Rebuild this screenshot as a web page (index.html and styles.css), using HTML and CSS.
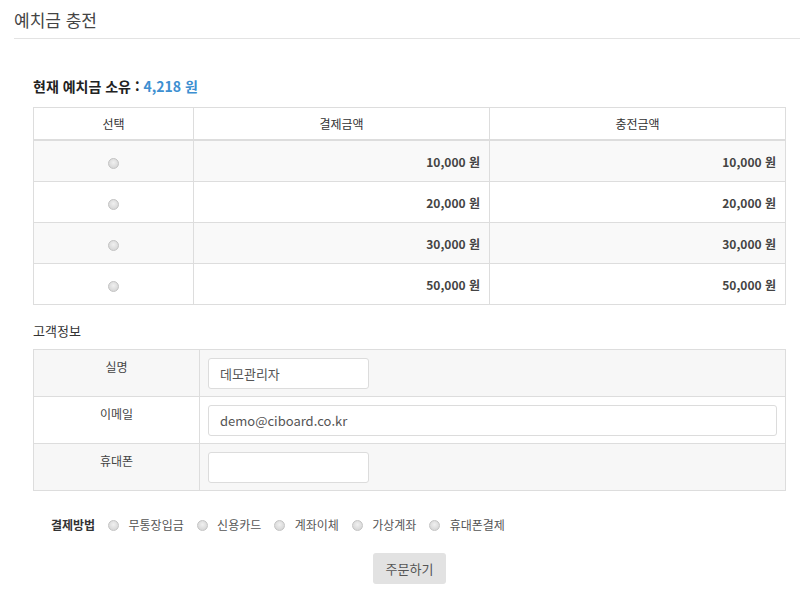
FILE: index.html
```html
<!DOCTYPE html>
<html lang="ko">
<head>
    <meta charset="UTF-8">
    <title>예치금 충전</title>
    <link rel="stylesheet" href="styles.css">
</head>
<body>
    <div class="page-title">예치금 충전</div>

    <div class="content">
        <h4 class="balance">현재 예치금 소유 : <span class="balance-amount">4,218 원</span></h4>

        <!-- 충전 금액 선택 -->
        <table class="charge-table">
            <tr>
                <th class="col-select">선택</th>
                <th class="col-pay">결제금액</th>
                <th>충전금액</th>
            </tr>
            <tr>
                <td class="center"><input type="radio" name="amount"></td>
                <td class="right">10,000 원</td>
                <td class="right">10,000 원</td>
            </tr>
            <tr>
                <td class="center"><input type="radio" name="amount"></td>
                <td class="right">20,000 원</td>
                <td class="right">20,000 원</td>
            </tr>
            <tr>
                <td class="center"><input type="radio" name="amount"></td>
                <td class="right">30,000 원</td>
                <td class="right">30,000 원</td>
            </tr>
            <tr>
                <td class="center"><input type="radio" name="amount"></td>
                <td class="right">50,000 원</td>
                <td class="right">50,000 원</td>
            </tr>
        </table>

        <!-- 고객정보 -->
        <div class="section-label">고객정보</div>
        <table class="info-table">
            <tr>
                <th>실명</th>
                <td><input type="text" class="input short" value="데모관리자"></td>
            </tr>
            <tr>
                <th>이메일</th>
                <td><input type="text" class="input" value="demo@ciboard.co.kr"></td>
            </tr>
            <tr>
                <th>휴대폰</th>
                <td><input type="text" class="input short"></td>
            </tr>
        </table>

        <div class="pay-methods">
            <strong>결제방법</strong>
            <label><input type="radio" name="pay"> 무통장입금</label>
            <label><input type="radio" name="pay"> 신용카드</label>
            <label><input type="radio" name="pay"> 계좌이체</label>
            <label><input type="radio" name="pay"> 가상계좌</label>
            <label><input type="radio" name="pay"> 휴대폰결제</label>
        </div>

        <div class="actions">
            <button class="btn-order">주문하기</button>
        </div>
    </div>
</body>
</html>
```

FILE: styles.css
```css
body {
    margin: 0;
    padding: 0;
    background-color: #fff;
    color: #333;
    font-family: "Noto Sans CJK KR", "Noto Sans", sans-serif;
    font-size: 12px;
}

.page-title {
    margin-left: 14px;
    padding: 9px 0 7px;
    font-size: 17px;
    line-height: 22px;
    color: #444;
    border-bottom: 1px solid #e3e3e3;
}

.content {
    padding: 0 14px 0 33px;
}

.balance {
    margin: 37px 0 11px;
    font-size: 14px;
    line-height: 20px;
    font-weight: bold;
    color: #222;
}

.balance-amount {
    color: #3d8fd1;
}

table {
    width: 100%;
    border-collapse: collapse;
}

.charge-table th,
.charge-table td {
    border: 1px solid #ddd;
    color: #333;
    font-size: 12px;
}

.charge-table th {
    height: 31px;
    padding: 0;
    font-weight: normal;
    border-bottom: 2px solid #ddd;
}

.charge-table td {
    height: 40px;
    padding: 0 9px;
    font-weight: bold;
    color: #444;
}

.charge-table tr:nth-child(even) td {
    background-color: #f9f9f9;
}

.col-select {
    width: 159px;
}

.col-pay {
    width: 295px;
}

.center {
    text-align: center;
}

.right {
    text-align: right;
}

input[type="radio"] {
    appearance: none;
    -webkit-appearance: none;
    width: 11px;
    height: 11px;
    margin: 0;
    border: 1px solid #c4c4c4;
    border-radius: 50%;
    background: radial-gradient(circle at 50% 40%, #f0f0f0, #cfcfcf);
    vertical-align: middle;
}

.section-label {
    margin: 17px 0 9px;
    font-size: 13px;
    line-height: 18px;
    color: #333;
}

.info-table th,
.info-table td {
    border: 1px solid #ddd;
}

.info-table th {
    width: 165px;
    height: 38px;
    padding: 8px 0 0;
    vertical-align: top;
    font-weight: normal;
    font-size: 12px;
    color: #444;
}

.info-table td {
    padding: 0 8px;
}

.info-table tr:nth-child(odd) th,
.info-table tr:nth-child(odd) td {
    background-color: #f7f7f7;
}

.input {
    box-sizing: border-box;
    width: 100%;
    height: 31px;
    padding: 0 11px;
    border: 1px solid #dcdcdc;
    border-radius: 3px;
    background-color: #fff;
    font-family: "Noto Sans CJK KR", "Noto Sans", sans-serif;
    font-size: 13px;
    color: #555;
}

.input.short {
    width: 161px;
}

.pay-methods {
    margin: 24px 0 0 18px;
    display: flex;
    align-items: center;
    gap: 13px;
    color: #555;
    line-height: 20px;
}

.pay-methods strong {
    color: #333;
    margin-right: 0;
}

.pay-methods label input {
    margin-right: 6px;
    margin-top: -2px;
}

.actions {
    margin-top: 18px;
    text-align: center;
}

.btn-order {
    width: 73px;
    height: 31px;
    border: none;
    border-radius: 3px;
    background-color: #e2e2e2;
    color: #555;
    font-family: "Noto Sans CJK KR", "Noto Sans", sans-serif;
    font-size: 13px;
}
```
